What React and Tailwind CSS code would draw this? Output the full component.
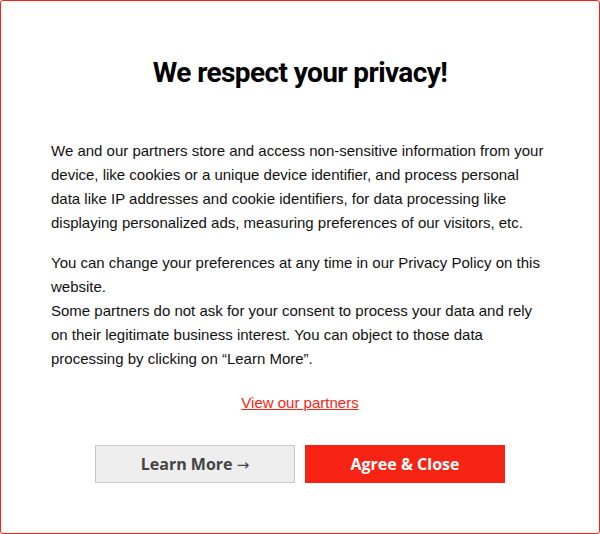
import React from 'react';

const App = () => {
  return (
    <div className="h-[534px] w-[600px] bg-white border border-[#f72314] rounded-[3px] px-[50px] pt-[52px] font-['Liberation_Sans',Arial,sans-serif] text-[#111]">
      {/* Header */}
      <h1 className="text-center font-['Roboto',sans-serif] font-bold text-[28px] leading-[40px] text-black tracking-[-0.6px]">
        We respect your privacy!
      </h1>

      {/* Body copy */}
      <div className="mt-[46px] text-[15px] leading-[24px]">
        <p>
          We and our partners store and access non-sensitive information from your device, like cookies or a unique device identifier, and process personal data like IP addresses and cookie identifiers, for data processing like displaying personalized ads, measuring preferences of our visitors, etc.
        </p>
        <p className="mt-[16px]">
          You can change your preferences at any time in our Privacy Policy on this website.
          <br />
          Some partners do not ask for your consent to process your data and rely on their legitimate business interest. You can object to those data processing by clicking on “Learn More”.
        </p>
      </div>

      <div className="mt-[20px] text-center">
        <a href="#" className="text-[15px] leading-[24px] text-[#f72314] underline">
          View our partners
        </a>
      </div>

      {/* Actions */}
      <div className="mt-[30px] flex justify-center gap-[10px] font-['Open_Sans',sans-serif] font-bold text-[16px]">
        <button className="w-[200px] h-[38px] bg-[#eeeeee] border border-[#c8c8c8] text-[#444]">
          Learn More <span className="font-['DejaVu_Sans',sans-serif] font-normal text-[15px]">→</span>
        </button>
        <button className="w-[200px] h-[38px] bg-[#f72314] text-white">
          Agree &amp; Close
        </button>
      </div>
    </div>
  );
};

export default App;
